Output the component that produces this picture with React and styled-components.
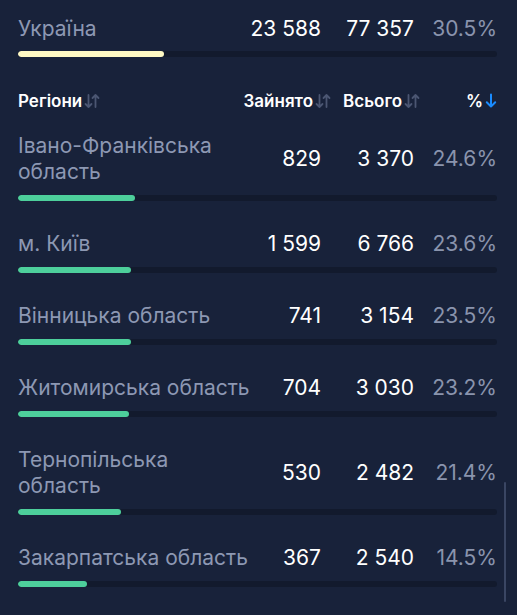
import React from "react";
import styled, { createGlobalStyle } from "styled-components";

const Global = createGlobalStyle`
  html, body { margin: 0; padding: 0; background: #18223a; }
  body { font-family: Inter, "Noto Sans", sans-serif; }
`;

const Page = styled.div`
  position: relative;
  width: 517px;
  height: 615px;
  overflow: hidden;
  background: #18223a;
  padding: 16px 20px 0 18px;
  box-sizing: border-box;
`;

const Grid = styled.div`
  display: grid;
  grid-template-columns: 245px 68px 89px 77px;
  align-items: center;
`;

const Name = styled.div`
  font-size: 21px;
  line-height: 26px;
  color: #8d98b3;
  padding-right: 10px;
`;

const Num = styled.div`
  display: flex;
  justify-content: flex-end;
  min-width: 0;
  font-size: 21px;
  line-height: 26px;
  white-space: nowrap;
  color: ${(p) => (p.$muted ? "#8a94ad" : "#ffffff")};
  padding-right: ${(p) => p.$pr || 0}px;
`;

const Track = styled.div`
  height: 6px;
  border-radius: 3px;
  background: #121a2d;
  margin-top: ${(p) => p.$mt}px;
  margin-bottom: ${(p) => p.$mb}px;
  overflow: hidden;
`;

const Fill = styled.div`
  height: 100%;
  border-radius: 3px;
  background: ${(p) => p.$color};
`;

const HeadCell = styled.div`
  display: flex;
  align-items: center;
  justify-content: ${(p) => (p.$left ? "flex-start" : "flex-end")};
  min-width: 0;
  font-size: 17px;
  font-weight: 600;
  line-height: 20px;
  color: #ffffff;
  gap: 2px;
  white-space: nowrap;
`;

const Icon = styled.svg`
  flex-shrink: 0;
  display: block;
`;

const Header = styled(Grid)`
  margin-bottom: 22px;
`;

const Scroll = styled.div`
  position: absolute;
  right: 11px;
  top: 482px;
  width: 2px;
  height: 120px;
  border-radius: 1px;
  background: #3a4663;
`;

const SortIcon = ({ active }) =>
  active ? (
    <Icon width="12" height="18" viewBox="0 0 12 18">
      <path d="M6 2.5v12M1.8 10.2L6 14.6l4.2-4.4" stroke="#1a8cff" strokeWidth="2" fill="none" strokeLinecap="round" strokeLinejoin="round" />
    </Icon>
  ) : (
    <Icon width="16" height="18" viewBox="0 0 16 18">
      <path d="M4.5 3v12M1.5 12l3 3 3-3" stroke="#4b5672" strokeWidth="1.8" fill="none" strokeLinecap="round" strokeLinejoin="round" />
      <path d="M11.5 15V3M8.5 6l3-3 3 3" stroke="#4b5672" strokeWidth="1.8" fill="none" strokeLinecap="round" strokeLinejoin="round" />
    </Icon>
  );

const rows = [
  ["Івано-Франківська область", "829", "3 370", "24.6%", 24.5],
  ["м. Київ", "1 599", "6 766", "23.6%", 23.6],
  ["Вінницька область", "741", "3 154", "23.5%", 23.5],
  ["Житомирська область", "704", "3 030", "23.2%", 23.2],
  ["Тернопільська область", "530", "2 482", "21.4%", 21.4],
  ["Закарпатська область", "367", "2 540", "14.5%", 14.5],
];

export default function App() {
  return (
    <>
      <Global />
      <Page>
        <Grid>
          <Name>Україна</Name>
          <Num $pr={10}>23 588</Num>
          <Num $pr={6}>77 357</Num>
          <Num $muted>30.5%</Num>
        </Grid>
        <Track $mt={9} $mb={34}>
          <Fill $color="#fef9c4" style={{ width: "30.5%" }} />
        </Track>
        <Header>
          <HeadCell $left>
            Регіони
            <SortIcon />
          </HeadCell>
          <HeadCell>
            Зайнято
            <SortIcon />
          </HeadCell>
          <HeadCell>
            Всього
            <SortIcon />
          </HeadCell>
          <HeadCell>
            %
            <SortIcon active />
          </HeadCell>
        </Header>
        {rows.map(([n, a, b, c, pct]) => (
          <div key={n}>
            <Grid>
              <Name>{n}</Name>
              <Num $pr={10}>{a}</Num>
              <Num $pr={6}>{b}</Num>
              <Num $muted>{c}</Num>
            </Grid>
            <Track $mt={10} $mb={30}>
              <Fill $color="#4dcf9b" style={{ width: `${pct}%` }} />
            </Track>
          </div>
        ))}
        <Scroll />
      </Page>
    </>
  );
}
